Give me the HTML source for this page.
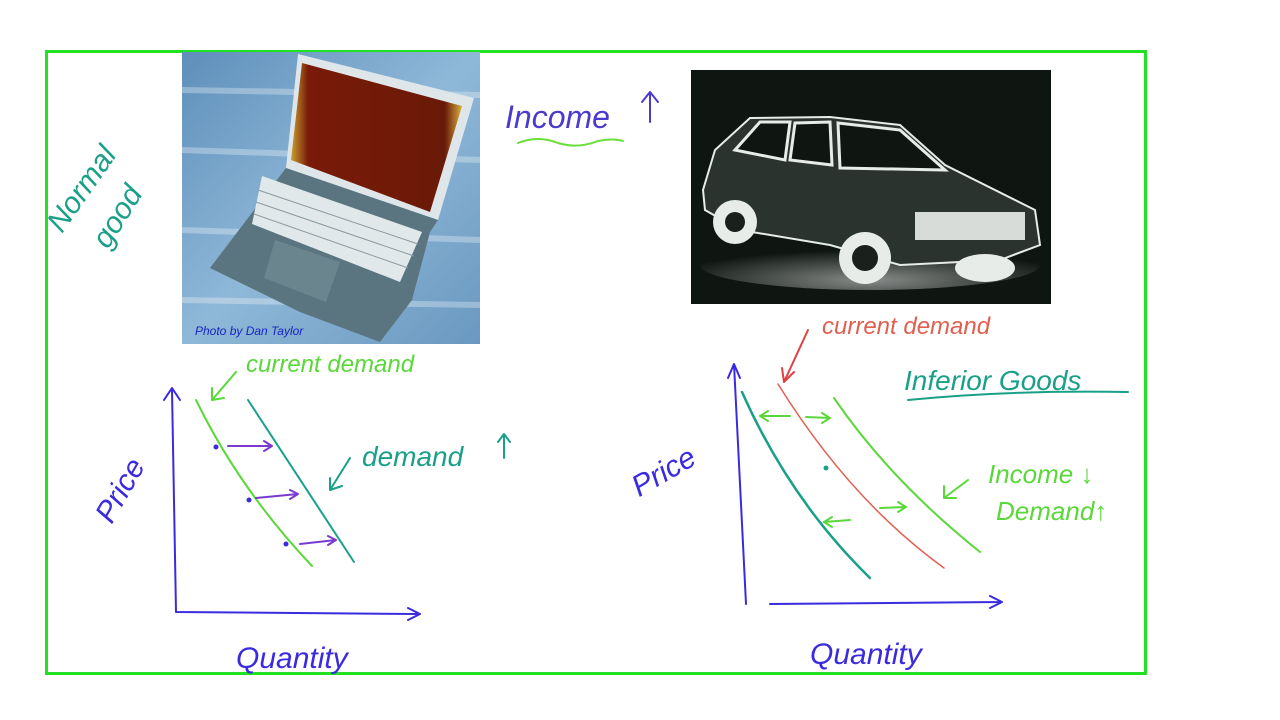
<!DOCTYPE html>
<html><head><meta charset="utf-8"><style>
html,body{margin:0;padding:0;background:#fff;width:1280px;height:720px;overflow:hidden}
svg{display:block}
text{font-family:"Liberation Sans",sans-serif;font-style:italic}
</style></head><body>
<svg width="1280" height="720" viewBox="0 0 1280 720" xmlns="http://www.w3.org/2000/svg">
<defs>
<linearGradient id="bg" x1="0" y1="0" x2="1" y2="1">
<stop offset="0" stop-color="#5e8fba"/><stop offset="0.5" stop-color="#8fb8d8"/><stop offset="1" stop-color="#6a98c0"/>
</linearGradient>
<linearGradient id="scr" x1="0" y1="0" x2="1" y2="0">
<stop offset="0" stop-color="#c8a030"/><stop offset="0.1" stop-color="#7a1a08"/><stop offset="0.9" stop-color="#6a1a08"/><stop offset="1" stop-color="#d8b040"/>
</linearGradient>
<radialGradient id="glow" cx="0.5" cy="0.8" r="0.6"><stop offset="0" stop-color="#fff" stop-opacity="0.5"/><stop offset="1" stop-color="#fff" stop-opacity="0"/></radialGradient>
</defs>
<rect x="46.5" y="51.5" width="1099" height="622" fill="none" stroke="#22e022" stroke-width="3"/>

<!-- laptop photo -->
<rect x="182" y="52" width="298" height="292" fill="url(#bg)"/>
<g opacity="0.3" stroke="#fff" stroke-width="6"><line x1="182" y1="90" x2="480" y2="95"/><line x1="182" y1="150" x2="480" y2="160"/><line x1="182" y1="230" x2="480" y2="240"/><line x1="182" y1="300" x2="480" y2="305"/></g>
<path d="M298 54 L474 98 L438 220 L286 168 Z" fill="#dfe6ea"/>
<path d="M302 63 L462 106 L430 212 L291 160 Z" fill="url(#scr)"/>
<path d="M286 168 L438 220 L430 232 L412 300 L380 342 L300 312 L210 268 Z" fill="#5a7580"/>
<path d="M262 176 L422 232 L400 282 L252 224 Z" fill="#e0e8ea"/>
<g stroke="#8a9aa0" stroke-width="1"><line x1="258" y1="190" x2="418" y2="244"/><line x1="256" y1="202" x2="414" y2="256"/><line x1="254" y1="214" x2="408" y2="268"/></g>
<path d="M275 240 L340 262 L326 302 L264 278 Z" fill="#6a858e"/>
<text x="195" y="335" font-size="12" fill="#1a24c0" font-style="normal">Photo by Dan Taylor</text>

<!-- car photo -->
<rect x="691" y="70" width="360" height="234" fill="#0f1612"/>
<ellipse cx="870" cy="265" rx="170" ry="25" fill="url(#glow)"/>
<path d="M703 190 L715 150 L750 118 L830 117 L900 125 L945 165 L1035 210 L1040 245 L1000 260 L900 265 L830 245 L740 230 L705 210 Z" fill="#2a332e" stroke="#e6ece8" stroke-width="2"/>
<path d="M735 150 L760 122 L790 122 L785 160 Z M795 123 L830 122 L832 165 L790 160 Z M838 123 L900 130 L945 170 L840 168 Z" fill="#0f1612" stroke="#e6ece8" stroke-width="3"/>
<rect x="915" y="212" width="110" height="28" fill="#d8dcd8"/>
<circle cx="735" cy="222" r="22" fill="#e8ece8"/><circle cx="735" cy="222" r="10" fill="#1a201c"/>
<circle cx="865" cy="258" r="26" fill="#e8ece8"/><circle cx="865" cy="258" r="13" fill="#1a201c"/>
<ellipse cx="985" cy="268" rx="30" ry="14" fill="#e8ece8"/>

<!-- handwriting -->
<g fill="none" stroke-linecap="round" stroke-linejoin="round">
<path d="M518 143 q20 -8 40 0 q20 6 40 -2 q15 -3 25 0" stroke="#6adf3a" stroke-width="2"/>
<path d="M650 92 L650 122 M642 102 L650 92 L658 102" stroke="#4a3ad0" stroke-width="2"/>
<path d="M908 400 q100 -10 220 -8" stroke="#1aa088" stroke-width="2"/>
<path d="M172 390 L176 612 L418 614 M408 608 L420 614 L408 620 M164 400 L172 388 L180 400" stroke="#3a2ae0" stroke-width="2"/>
<path d="M196 400 Q240 490 312 566" stroke="#5ad83a" stroke-width="2"/>
<path d="M248 400 Q300 480 354 562" stroke="#1aa088" stroke-width="2"/>
<path d="M228 446 L272 446 M264 441 L272 446 L264 451 M256 498 L298 494 M290 490 L298 494 L290 499 M300 544 L336 540 M328 536 L336 540 L328 545" stroke="#7a3ad0" stroke-width="2"/>
<circle cx="216" cy="447" r="2.5" fill="#3a2ae0"/><circle cx="249" cy="500" r="2.5" fill="#3a2ae0"/><circle cx="286" cy="544" r="2.5" fill="#3a2ae0"/>
<path d="M236 372 L212 400 M212 388 L212 400 L224 398" stroke="#5ad83a" stroke-width="2"/>
<path d="M350 458 L330 490 M330 478 L330 490 L342 486" stroke="#1aa088" stroke-width="2"/>
<path d="M504 434 L504 458 M498 442 L504 434 L510 442" stroke="#1aa088" stroke-width="2"/>
<path d="M734 364 L746 604 M740 378 L734 364 L728 378 M770 604 L1000 602 M990 596 L1002 602 L990 608" stroke="#3a2ae0" stroke-width="2"/>
<path d="M742 392 Q790 500 870 578" stroke="#1aa088" stroke-width="2.5"/>
<path d="M778 384 Q850 500 944 568" stroke="#e06050" stroke-width="1.5"/>
<path d="M834 398 Q890 480 980 552" stroke="#5ad83a" stroke-width="2"/>
<path d="M808 330 L784 382 M782 368 L784 382 L794 372" stroke="#e04040" stroke-width="2"/>
<path d="M760 416 L790 416 M768 411 L760 416 L768 421 M806 417 L830 418 M822 413 L830 418 L822 423 M850 520 L824 522 M832 517 L824 522 L832 527 M880 508 L906 507 M898 502 L906 507 L898 512" stroke="#5ad83a" stroke-width="2"/>
<circle cx="826" cy="468" r="2.5" fill="#1aa088"/>
<path d="M968 480 L944 498 M944 486 L944 498 L956 498" stroke="#5ad83a" stroke-width="2"/>
</g>
<g>
<text x="505" y="128" fill="#4a3ad0" font-size="32">Income</text>
<text x="62" y="234" fill="#1aa088" font-size="30" transform="rotate(-55 62 234)">Normal</text>
<text x="108" y="250" fill="#1aa088" font-size="30" transform="rotate(-58 108 250)">good</text>
<text x="246" y="372" fill="#5ad83a" font-size="24">current demand</text>
<text x="362" y="466" fill="#1aa088" font-size="28">demand</text>
<text x="80" y="520" fill="#3a2ae0" font-size="30" transform="rotate(-60 100 495)">Price</text>
<text x="236" y="668" fill="#3a2ae0" font-size="30">Quantity</text>
<text x="822" y="334" fill="#e06050" font-size="24">current demand</text>
<text x="904" y="390" fill="#1aa088" font-size="28">Inferior Goods</text>
<text x="625" y="485" fill="#3a2ae0" font-size="30" transform="rotate(-30 655 465)">Price</text>
<text x="988" y="483" fill="#5ad83a" font-size="26">Income ↓</text>
<text x="996" y="520" fill="#5ad83a" font-size="26">Demand↑</text>
<text x="810" y="664" fill="#3a2ae0" font-size="30">Quantity</text>
</g>
</svg>
</body></html>
